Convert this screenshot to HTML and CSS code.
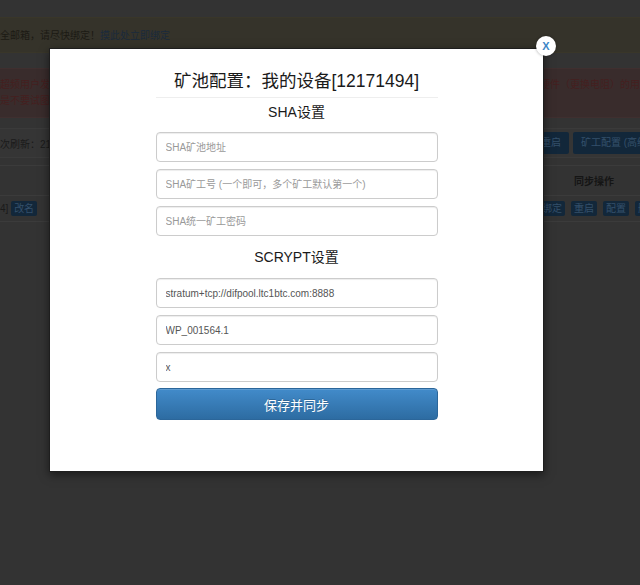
FILE: index.html
```html
<!DOCTYPE html>
<html lang="zh-CN">
<head>
<meta charset="utf-8">
<title>矿池配置</title>
<link rel="stylesheet" href="styles.css">
</head>
<body>
<div class="page">
  <div class="topbar"></div>
  <div class="alert-warning">全邮箱，请尽快绑定！<a class="alert-link" href="#">摸此处立即绑定</a></div>
  <div class="alert-danger">
    <div class="alert-line"><span>超频用户发现</span><span>硬件（更换电阻）的用户请联系客服</span></div>
    <div class="alert-line"><span>是不要试图超频</span><span></span></div>
  </div>
  <div class="toolbar">
    <span>次刷新<span class="punct">：</span>21秒</span>
    <div class="btns"><span class="btn">重启</span><span class="btn">矿工配置 (高级)</span></div>
  </div>
  <div class="grid">
    <div class="grid-row head"><span></span><span class="th">同步操作</span></div>
    <div class="grid-row data">
      <span class="cell-left">4] <span class="btn btn-xs">改名</span></span>
      <span class="cell-btns"><span class="btn btn-xs">绑定</span><span class="btn btn-xs">重启</span><span class="btn btn-xs">配置</span><span class="btn btn-xs">删除</span></span>
    </div>
  </div>
</div>

<div class="modal">
  <span class="close">X</span>
  <div class="form">
    <h3 class="title">矿池配置<span class="punct">：</span>我的设备[12171494]</h3>
    <hr class="divider">
    <h4 class="section">SHA设置</h4>
    <input class="field first" type="text" placeholder="SHA矿池地址">
    <input class="field" type="text" placeholder="SHA矿工号 (一个即可，多个矿工默认第一个)">
    <input class="field" type="text" placeholder="SHA统一矿工密码">
    <h4 class="section section-2">SCRYPT设置</h4>
    <input class="field first-2" type="text" value="stratum+tcp://difpool.ltc1btc.com:8888">
    <input class="field" type="text" value="WP_001564.1">
    <input class="field" type="text" value="x">
    <button class="save" type="button">保存并同步</button>
  </div>
</div>
</body>
</html>
```
FILE: styles.css
```css
* { box-sizing: border-box; }
html, body { margin: 0; padding: 0; }
body {
  width: 640px;
  height: 585px;
  overflow: hidden;
  position: relative;
  background: #333333;
  font-family: "Liberation Sans", "Noto Sans CJK SC", sans-serif;
}
.punct {
  font-family: "Noto Sans CJK TC", "Noto Sans CJK SC", sans-serif;
  line-height: 1;
}

/* dimmed page behind the dialog */
.page { width: 640px; overflow: hidden; font-size: 10px; white-space: nowrap; }
.topbar { height: 17px; background: #333333; }
.alert-warning {
  height: 36px;
  line-height: 36px;
  background: #35332a;
  color: #1c1a14;
  border-top: 1px solid #393629;
  border-bottom: 1px solid #393629;
}
.alert-link { color: #1a2a3c; text-decoration: none; }
.alert-danger {
  margin-top: 15px;
  height: 50px;
  padding: 8px 0;
  background: #392c2c;
  border-top: 1px solid #3f2f2f;
  border-bottom: 1px solid #3f2f2f;
  color: #451f1f;
  line-height: 16px;
}
.alert-line {
  display: grid;
  grid-template-columns: 540px auto;
  overflow: hidden;
}
.toolbar {
  margin-top: 10px;
  height: 30px;
  display: grid;
  grid-template-columns: 533px auto;
  align-items: center;
  background: #353535;
  border-top: 1px solid #3a3a3a;
  border-bottom: 1px solid #3a3a3a;
  color: #1a1a1a;
}
.btns { display: flex; gap: 4px; }
.btn {
  display: inline-block;
  height: 22px;
  line-height: 22px;
  padding: 0 8px;
  border-radius: 2px;
  background: #12273a;
  color: #34506b;
}
.btn-xs { height: 15px; line-height: 15px; padding: 0 3px; }
.grid { margin-top: 7px; }
.grid-row {
  display: grid;
  grid-template-columns: 539px 110px;
  align-items: center;
  border-top: 1px solid #3b3b3b;
}
.grid-row.head { height: 30px; }
.grid-row.data { height: 27px; border-bottom: 1px solid #3b3b3b; }
.th { text-align: center; font-weight: bold; color: #151515; }
.cell-left { color: #1a1a1a; }
.cell-btns { display: flex; gap: 6px; }

/* dialog */
.modal {
  position: absolute;
  left: 49px;
  top: 48px;
  width: 495px;
  height: 424px;
  background: #ffffff;
  border: 1px solid #1e1e1e;
  box-shadow: 0 3px 9px rgba(0, 0, 0, 0.5);
}
.close {
  position: absolute;
  right: -13px;
  top: -13px;
  width: 20px;
  height: 20px;
  border-radius: 50%;
  background: #ffffff;
  color: #3d86c6;
  font-size: 11px;
  font-weight: bold;
  line-height: 20px;
  text-align: center;
  box-shadow: 0 0 3px rgba(0, 0, 0, 0.35);
}
.form {
  width: 282px;
  margin: 0 auto;
  padding-top: 20px;
  display: flex;
  flex-direction: column;
}
.title {
  margin: 0;
  height: 24px;
  font-size: 17.5px;
  line-height: 24px;
  font-weight: normal;
  text-align: center;
  color: #1a1a1a;
  white-space: nowrap;
}
.divider {
  width: 100%;
  margin: 4px 0 0;
  border: 0;
  border-top: 1px solid #eeeeee;
}
.section {
  margin: 4px 0 0;
  font-size: 14px;
  line-height: 20px;
  font-weight: normal;
  text-align: center;
  color: #1a1a1a;
}
.section-2 { margin-top: 11px; }
.field {
  display: block;
  width: 100%;
  height: 30px;
  margin: 7px 0 0;
  padding: 0 9px;
  border: 1px solid #cccccc;
  border-radius: 4px;
  background: #ffffff;
  box-shadow: inset 0 1px 1px rgba(0, 0, 0, 0.075);
  font-family: "Liberation Sans", "Noto Sans CJK SC", sans-serif;
  font-size: 10px;
  color: #555555;
  outline: none;
}
.field.first { margin-top: 10px; }
.field.first-2 { margin-top: 11px; }
.field::placeholder { color: #999999; opacity: 1; }
.save {
  margin-top: 6px;
  height: 32px;
  width: 100%;
  border: 1px solid #2b669a;
  border-radius: 4px;
  background: linear-gradient(to bottom, #428bca 0%, #2d6ca2 100%);
  color: #ffffff;
  font-family: "Liberation Sans", "Noto Sans CJK SC", sans-serif;
  font-size: 13px;
  text-shadow: 0 -1px 0 rgba(0, 0, 0, 0.2);
  box-shadow: inset 0 1px 0 rgba(255, 255, 255, 0.15);
}
```
